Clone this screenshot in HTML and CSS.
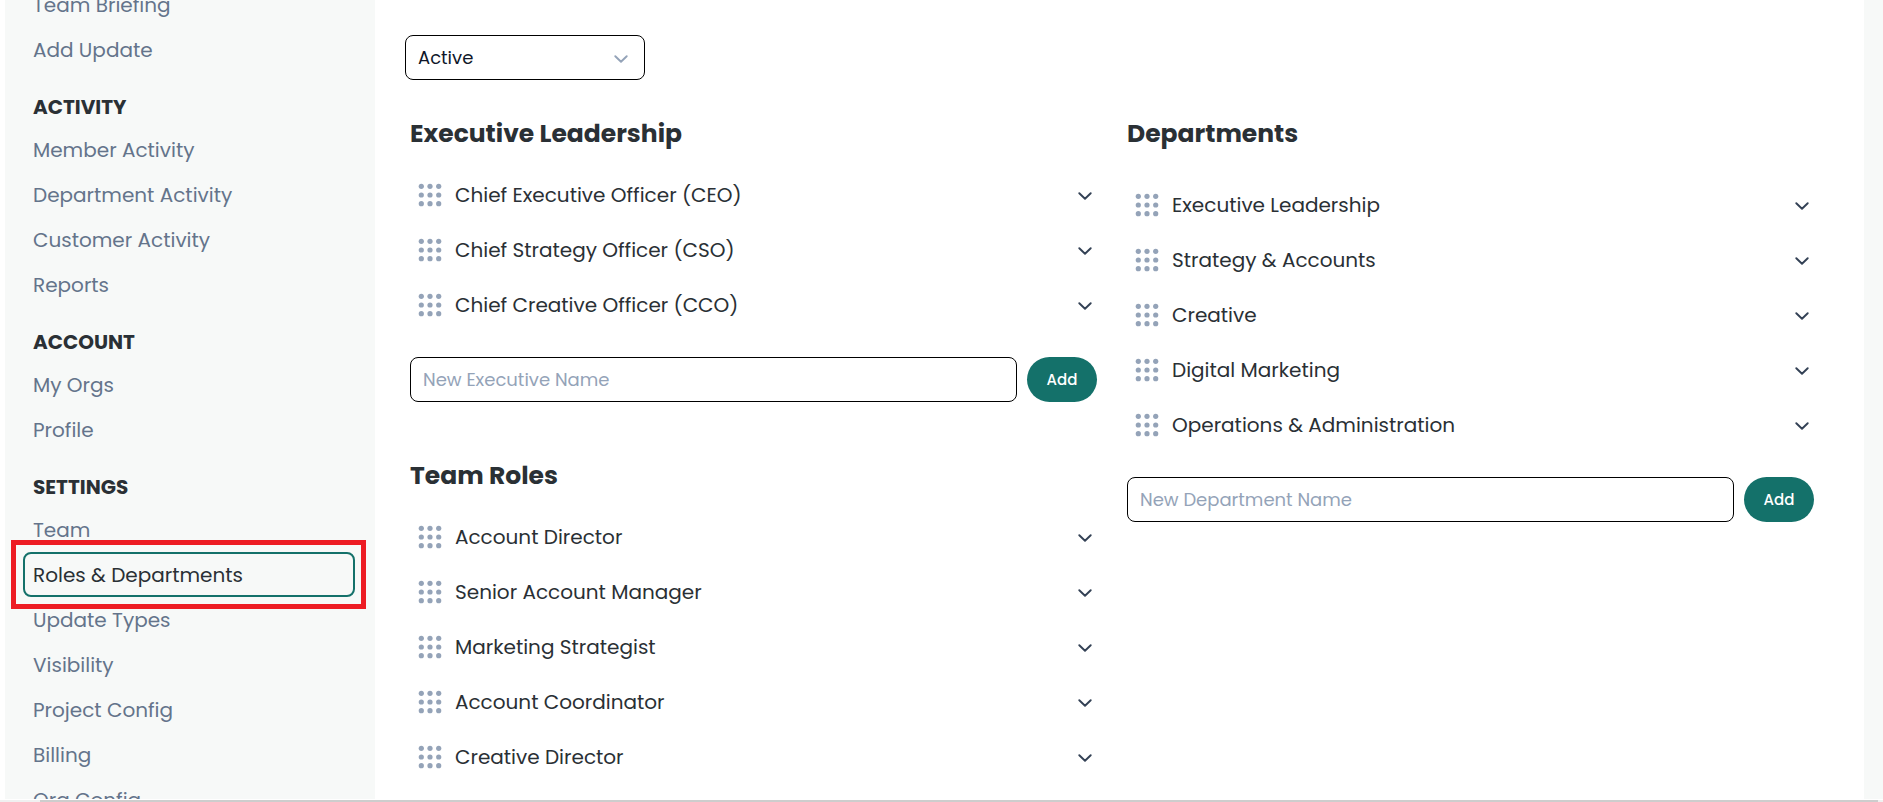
FILE: index.html
```html
<!DOCTYPE html>
<html lang="en">
<head>
<meta charset="utf-8">
<title>Roles &amp; Departments</title>
<link rel="stylesheet" href="styles.css">
</head>
<body>
<svg class="sprite" aria-hidden="true">
  <symbol id="grip" viewBox="0 0 24 24">
    <circle cx="3.3" cy="3.3" r="2.6"/><circle cx="12" cy="3.3" r="2.6"/><circle cx="20.7" cy="3.3" r="2.6"/>
    <circle cx="3.3" cy="12" r="2.6"/><circle cx="12" cy="12" r="2.6"/><circle cx="20.7" cy="12" r="2.6"/>
    <circle cx="3.3" cy="20.7" r="2.6"/><circle cx="12" cy="20.7" r="2.6"/><circle cx="20.7" cy="20.7" r="2.6"/>
  </symbol>
  <symbol id="chevron" viewBox="0 0 14 8">
    <path d="M1.3 1.2 7 6.7l5.700-5.500" fill="none" stroke="currentColor" stroke-width="1.900" stroke-linecap="round" stroke-linejoin="round"/>
  </symbol>
</svg>
<div class="app">
  <nav class="sidebar" aria-label="Main">
    <div class="nav">
      <ul class="nav-list">
        <li><a class="nav-link" href="#">Team Briefing</a></li>
        <li><a class="nav-link" href="#">Add Update</a></li>
      </ul>
      <h3 class="nav-title">ACTIVITY</h3>
      <ul class="nav-list">
        <li><a class="nav-link" href="#">Member Activity</a></li>
        <li><a class="nav-link" href="#">Department Activity</a></li>
        <li><a class="nav-link" href="#">Customer Activity</a></li>
        <li><a class="nav-link" href="#">Reports</a></li>
      </ul>
      <h3 class="nav-title">ACCOUNT</h3>
      <ul class="nav-list">
        <li><a class="nav-link" href="#">My Orgs</a></li>
        <li><a class="nav-link" href="#">Profile</a></li>
      </ul>
      <h3 class="nav-title">SETTINGS</h3>
      <ul class="nav-list">
        <li><a class="nav-link" href="#">Team</a></li>
        <li class="highlight"><a class="nav-link active" href="#" aria-current="page">Roles &amp; Departments</a></li>
        <li><a class="nav-link" href="#">Update Types</a></li>
        <li><a class="nav-link" href="#">Visibility</a></li>
        <li><a class="nav-link" href="#">Project Config</a></li>
        <li><a class="nav-link" href="#">Billing</a></li>
        <li><a class="nav-link" href="#">Org Config</a></li>
      </ul>
    </div>
  </nav>
  <main class="main">
    <div class="filter">
      <select class="select" aria-label="Status"><option>Active</option><option>Inactive</option></select>
      <svg class="chevron select-chevron" aria-hidden="true"><use href="#chevron"/></svg>
    </div>
    <div class="columns">
      <div class="column">
        <section>
          <h2 class="title">Executive Leadership</h2>
          <ul class="rows">
            <li class="row"><svg class="grip"><use href="#grip"/></svg><span class="name">Chief Executive Officer (CEO)</span><button class="toggle" aria-label="Expand"><svg class="chevron"><use href="#chevron"/></svg></button></li>
            <li class="row"><svg class="grip"><use href="#grip"/></svg><span class="name">Chief Strategy Officer (CSO)</span><button class="toggle" aria-label="Expand"><svg class="chevron"><use href="#chevron"/></svg></button></li>
            <li class="row"><svg class="grip"><use href="#grip"/></svg><span class="name">Chief Creative Officer (CCO)</span><button class="toggle" aria-label="Expand"><svg class="chevron"><use href="#chevron"/></svg></button></li>
          </ul>
          <form class="add">
            <input class="input" type="text" placeholder="New Executive Name" aria-label="New Executive Name">
            <button class="button" type="button">Add</button>
          </form>
        </section>
        <section>
          <h2 class="title">Team Roles</h2>
          <ul class="rows">
            <li class="row"><svg class="grip"><use href="#grip"/></svg><span class="name">Account Director</span><button class="toggle" aria-label="Expand"><svg class="chevron"><use href="#chevron"/></svg></button></li>
            <li class="row"><svg class="grip"><use href="#grip"/></svg><span class="name">Senior Account Manager</span><button class="toggle" aria-label="Expand"><svg class="chevron"><use href="#chevron"/></svg></button></li>
            <li class="row"><svg class="grip"><use href="#grip"/></svg><span class="name">Marketing Strategist</span><button class="toggle" aria-label="Expand"><svg class="chevron"><use href="#chevron"/></svg></button></li>
            <li class="row"><svg class="grip"><use href="#grip"/></svg><span class="name">Account Coordinator</span><button class="toggle" aria-label="Expand"><svg class="chevron"><use href="#chevron"/></svg></button></li>
            <li class="row"><svg class="grip"><use href="#grip"/></svg><span class="name">Creative Director</span><button class="toggle" aria-label="Expand"><svg class="chevron"><use href="#chevron"/></svg></button></li>
          </ul>
        </section>
      </div>
      <div class="column">
        <section>
          <h2 class="title">Departments</h2>
          <ul class="rows departments">
            <li class="row"><svg class="grip"><use href="#grip"/></svg><span class="name">Executive Leadership</span><button class="toggle" aria-label="Expand"><svg class="chevron"><use href="#chevron"/></svg></button></li>
            <li class="row"><svg class="grip"><use href="#grip"/></svg><span class="name">Strategy &amp; Accounts</span><button class="toggle" aria-label="Expand"><svg class="chevron"><use href="#chevron"/></svg></button></li>
            <li class="row"><svg class="grip"><use href="#grip"/></svg><span class="name">Creative</span><button class="toggle" aria-label="Expand"><svg class="chevron"><use href="#chevron"/></svg></button></li>
            <li class="row"><svg class="grip"><use href="#grip"/></svg><span class="name">Digital Marketing</span><button class="toggle" aria-label="Expand"><svg class="chevron"><use href="#chevron"/></svg></button></li>
            <li class="row"><svg class="grip"><use href="#grip"/></svg><span class="name">Operations &amp; Administration</span><button class="toggle" aria-label="Expand"><svg class="chevron"><use href="#chevron"/></svg></button></li>
          </ul>
          <form class="add">
            <input class="input" type="text" placeholder="New Department Name" aria-label="New Department Name">
            <button class="button" type="button">Add</button>
          </form>
        </section>
      </div>
    </div>
  </main>
</div>
<div class="scrollbar"><div class="thumb"></div></div>
</body>
</html>
```
FILE: styles.css
```css
* { box-sizing: border-box; }

body {
  margin: 0;
  height: 100vh;
  display: flex;
  flex-direction: column;
  gap: 1px;
  overflow: hidden;
  background: #fff;
  color: #2a3035;
  font-family: Poppins, Inter, "Liberation Sans", sans-serif;
  font-size: 20px;
  line-height: 30px;
}

h2, h3, ul { margin: 0; padding: 0; }
ul { list-style: none; }
.sprite { display: none; }

.app {
  flex: 1;
  min-height: 0;
  display: flex;
  margin-left: 5px;
  overflow: hidden;
  background: #f7f9f8;
}

.sidebar {
  flex: none;
  width: 370px;
  padding: 0 20px 0 18px;
}

/* The menu is scrolled past its first entries. */
.nav { margin-top: -18px; }

.nav-link {
  display: flex;
  align-items: center;
  height: 45px;
  padding: 0 10px;
  color: #64748b;
  text-decoration: none;
  white-space: nowrap;
}

.nav-link.active {
  padding: 0 8px;
  border: 2px solid #14716a;
  border-radius: 8px;
  color: #2a3035;
}

.nav-title {
  margin-top: 15px;
  padding: 0 10px;
  font-size: 20px;
  line-height: 40px;
  font-weight: 700;
}

.highlight { position: relative; }
.highlight::after {
  content: "";
  position: absolute;
  inset: -12px -11px -12px -12px;
  border: 5px solid #ed1c24;
  pointer-events: none;
}

.main {
  flex: 1;
  min-width: 0;
  margin-right: 19px;
  padding: 35px 50px 0 30px;
  background: #fff;
}

.filter {
  position: relative;
  width: 240px;
}

.select {
  appearance: none;
  display: block;
  width: 100%;
  height: 45px;
  padding: 0 12px;
  border: 1px solid #000;
  border-radius: 8px;
  background: #fff;
  color: #0f172a;
  font: inherit;
  font-size: 18px;
}

.chevron { display: block; width: 14px; height: 8px; }
.select-chevron {
  position: absolute;
  top: 20px;
  right: 17px;
  color: #94a3b8;
  pointer-events: none;
}

.columns {
  display: grid;
  grid-template-columns: 1fr 1fr;
  gap: 30px;
  margin-top: 34px;
  padding-left: 5px;
}

.column {
  display: flex;
  flex-direction: column;
  gap: 54px;
}

.title {
  font-size: 25px;
  line-height: 40px;
  font-weight: 700;
}

.rows { margin-top: 13px; }
.departments { margin-top: 23px; }

.row {
  display: flex;
  align-items: center;
  gap: 13px;
  height: 55px;
  padding: 0 5px 0 8px;
}

.grip { flex: none; width: 24px; height: 24px; fill: #94a3b8; }
.name { flex: 1; }

.toggle {
  padding: 2px 0 0;
  border: 0;
  background: none;
  color: #334155;
}

.add {
  display: flex;
  gap: 10px;
  margin-top: 25px;
}

.input {
  flex: 1;
  min-width: 0;
  height: 45px;
  padding: 0 12px;
  border: 1px solid #000;
  border-radius: 8px;
  background: #fff;
  font: inherit;
  font-size: 18px;
}
.input::placeholder { color: #94a3b8; opacity: 1; }

.button {
  width: 70px;
  height: 45px;
  padding: 0;
  border: 0;
  border-radius: 23px;
  background: #14716a;
  color: #fff;
  font: inherit;
  font-size: 15px;
  font-weight: 500;
}

.scrollbar {
  height: 2px;
  padding: 0 5px 0 40px;
  background: #f0f0f0;
}
.thumb { height: 2px; background: #cdcdcd; }
```
